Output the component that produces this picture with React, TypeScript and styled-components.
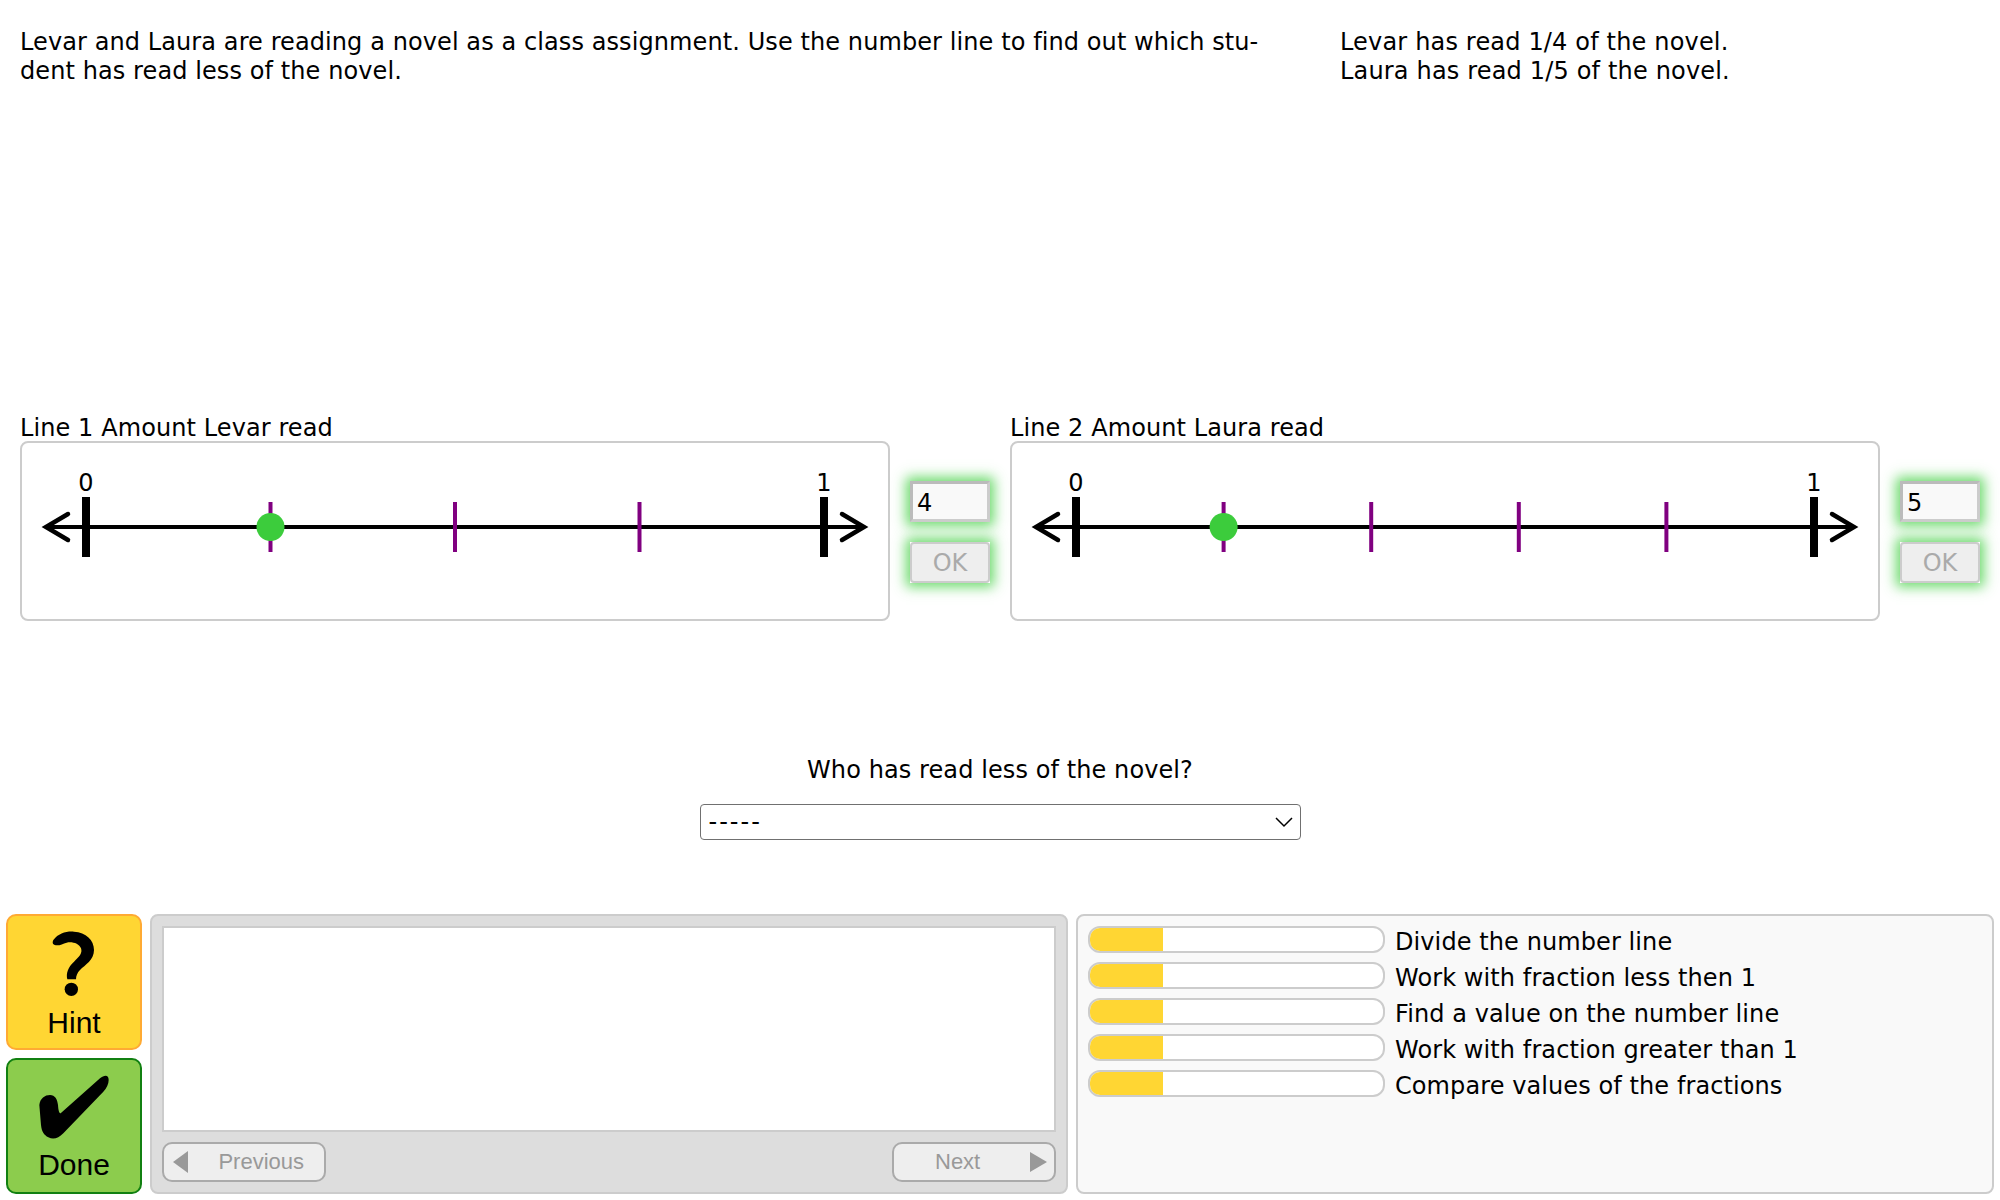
import React from "react";
import styled, { createGlobalStyle } from "styled-components";

const Global = createGlobalStyle`
  html, body { margin: 0; padding: 0; background: #fff; }
  * { box-sizing: border-box; }
`;

const Page = styled.div`
  width: 2000px;
  height: 1200px;
  overflow: hidden;
  font-family: "DejaVu Sans", Verdana, sans-serif;
  font-size: 24px;
  line-height: 29px;
  letter-spacing: 0.09px;
  color: #000;
`;

const Prompt = styled.div`
  height: 412px;
  padding: 28px 0 0 20px;
  display: flex;
`;
const PromptText = styled.div`
  width: 1320px;
`;
const PromptFacts = styled.div`
  letter-spacing: 0.17px;
`;

const Lines = styled.div`
  display: flex;
  gap: 20px;
  padding-left: 20px;
`;
const LineGroup = styled.div`
  width: 970px;
`;
const LineTitle = styled.div`
  height: 29px;
  line-height: 32px;
`;
const LineBody = styled.div`
  display: flex;
  gap: 20px;
`;
const LinePanel = styled.div`
  width: 870px;
  height: 180px;
  border: 2px solid #ccc;
  border-radius: 8px;
  background: #fff;
`;
const LineSvg = styled.svg`
  display: block;
`;
const TickLabel = styled.text`
  font-family: "DejaVu Sans", Verdana, sans-serif;
  font-size: 24px;
`;
const Controls = styled.div`
  width: 80px;
  padding-top: 40px;
  display: flex;
  flex-direction: column;
  gap: 20px;
`;
const ValueInput = styled.input`
  display: block;
  width: 80px;
  height: 41px;
  padding: 2px 0 0 4px;
  border-style: solid;
  border-width: 3px;
  border-color: #bbb #ccc #ccc #bbb;
  background: #f9f9f9;
  font: 24px "DejaVu Sans", Verdana, sans-serif;
  color: #000;
  outline: none;
  box-shadow: 0 0 12px 4px rgba(51, 204, 51, 0.72);
`;
const OkButton = styled.button`
  display: block;
  width: 80px;
  height: 41px;
  padding: 0;
  border: 2px solid #ccc;
  border-radius: 4px;
  background: #eee;
  font: 24px "DejaVu Sans", Verdana, sans-serif;
  color: #aaa;
`;
const OkFrame = styled.div`
  background: #fff;
  box-shadow: 0 0 12px 4px rgba(51, 204, 51, 0.72);
`;

const Question = styled.div`
  margin-top: 135px;
  text-align: center;
`;
const SelectWrap = styled.div`
  position: relative;
  width: 601px;
  height: 36px;
  margin: 19px auto 0;
`;
const Select = styled.select`
  appearance: none;
  display: block;
  width: 100%;
  height: 100%;
  padding: 0 8px;
  border: 1.5px solid #707070;
  border-radius: 4px;
  background: #fff;
  font: 24px "DejaVu Sans", Verdana, sans-serif;
  letter-spacing: 2px;
  color: #000;
`;
const Chevron = styled.svg`
  position: absolute;
  right: 7px;
  top: 12px;
  pointer-events: none;
`;

const Bottom = styled.div`
  margin-top: 74px;
  display: flex;
  gap: 8px;
  padding-left: 6px;
`;
const ActionColumn = styled.div`
  display: flex;
  flex-direction: column;
  gap: 8px;
`;
const ActionButton = styled.button<{ $bg: string; $edge: string }>`
  width: 136px;
  height: 136px;
  padding: 0;
  border: 2px solid ${(p) => p.$edge};
  border-radius: 10px;
  background: ${(p) => p.$bg};
  font: 30px/33px "Liberation Sans", Arial, sans-serif;
  color: #000;
  display: flex;
  flex-direction: column;
  align-items: center;
`;
const ActionIcon = styled.svg`
  display: block;
  flex: none;
`;

const MessagePanel = styled.div`
  width: 918px;
  height: 280px;
  padding: 10px;
  background: #ddd;
  border: 2px solid #ccc;
  border-radius: 8px;
`;
const MessageBox = styled.div`
  width: 894px;
  height: 206px;
  background: #fff;
  border: 2px solid #ccc;
`;
const NavRow = styled.div`
  display: flex;
  justify-content: space-between;
  margin-top: 10px;
  width: 894px;
`;
const NavButton = styled.button`
  width: 164px;
  height: 40px;
  padding: 0 7px 0 9px;
  border: 2px solid #aaa;
  border-radius: 10px;
  background: #eee;
  font: 22px "Liberation Sans", Arial, sans-serif;
  color: #999;
  display: flex;
  align-items: center;
  justify-content: space-between;
`;
const NavLabel = styled.span<{ $pad: string }>`
  padding: ${(p) => p.$pad};
`;

const GoalsPanel = styled.div`
  width: 918px;
  height: 280px;
  padding: 10px;
  background: #f9f9f9;
  border: 2px solid #ccc;
  border-radius: 8px;
  display: flex;
  flex-direction: column;
  gap: 9px;
`;
const GoalRow = styled.div`
  display: flex;
  align-items: center;
  gap: 10px;
  height: 27px;
`;
const GoalText = styled.span`
  padding-top: 6px;
`;
const Bar = styled.div`
  width: 297px;
  height: 27px;
  border: 2px solid #ccc;
  border-radius: 12px;
  background: #fff;
  overflow: hidden;
`;
const BarFill = styled.div`
  height: 100%;
  background: #ffd633;
`;

function NumberLine({ parts }: { parts: number }) {
  const x0 = 64;
  const x1 = 802;
  const step = (x1 - x0) / parts;
  const ticks = Array.from({ length: parts - 1 }, (_, i) => x0 + step * (i + 1));
  return (
    <LineSvg width={866} height={176} viewBox="0 0 866 176">
      <line x1={26} y1={84} x2={840} y2={84} stroke="#000" strokeWidth={4} />
      <path d="M46 71 L24 84 L46 97" fill="none" stroke="#000" strokeWidth={4.5} strokeLinecap="round" />
      <path d="M820 71 L842 84 L820 97" fill="none" stroke="#000" strokeWidth={4.5} strokeLinecap="round" />
      {ticks.map((x) => (
        <line key={x} x1={x} y1={59} x2={x} y2={109} stroke="#800080" strokeWidth={4} />
      ))}
      <line x1={x0} y1={54} x2={x0} y2={114} stroke="#000" strokeWidth={8} />
      <line x1={x1} y1={54} x2={x1} y2={114} stroke="#000" strokeWidth={8} />
      <TickLabel x={x0} y={48} textAnchor="middle">0</TickLabel>
      <TickLabel x={x1} y={48} textAnchor="middle">1</TickLabel>
      <circle cx={ticks[0]} cy={84} r={14} fill="#3ccc3c" />
    </LineSvg>
  );
}

function LineBlock({ title, parts, value }: { title: string; parts: number; value: string }) {
  return (
    <LineGroup>
      <LineTitle>{title}</LineTitle>
      <LineBody>
        <LinePanel>
          <NumberLine parts={parts} />
        </LinePanel>
        <Controls>
          <ValueInput value={value} readOnly />
          <OkFrame>
            <OkButton disabled>OK</OkButton>
          </OkFrame>
        </Controls>
      </LineBody>
    </LineGroup>
  );
}

const goals = [
  "Divide the number line",
  "Work with fraction less then 1",
  "Find a value on the number line",
  "Work with fraction greater than 1",
  "Compare values of the fractions",
];

export default function App() {
  return (
    <Page>
      <Global />
      <Prompt>
        <PromptText>
          Levar and Laura are reading a novel as a class assignment. Use the number line to find out which stu-
          <br />
          dent has read less of the novel.
        </PromptText>
        <PromptFacts>
          Levar has read 1/4 of the novel.
          <br />
          Laura has read 1/5 of the novel.
        </PromptFacts>
      </Prompt>
      <Lines>
        <LineBlock title="Line 1 Amount Levar read" parts={4} value="4" />
        <LineBlock title="Line 2 Amount Laura read" parts={5} value="5" />
      </Lines>
      <Question>
        <div>Who has read less of the novel?</div>
        <SelectWrap>
          <Select defaultValue="none">
            <option value="none">-----</option>
            <option value="levar">Levar</option>
            <option value="laura">Laura</option>
          </Select>
          <Chevron width={20} height={12} viewBox="0 0 20 12">
            <path d="M2 2 L10 10 L18 2" fill="none" stroke="#000" strokeWidth={1.5} />
          </Chevron>
        </SelectWrap>
      </Question>
      <Bottom>
        <ActionColumn>
          <ActionButton $bg="#ffd633" $edge="#ffaa33">
            <ActionIcon width={132} height={90} viewBox="24 48 396 270">
              <path d="M160 120 C175 100 200 93 222 95 C258 97 282 120 282 150 C282 180 255 195 240 210 C232 218 228 228 228 238 L202 238 C197 220 205 200 222 185 C238 170 248 160 243 145 C238 130 215 124 200 128 C190 131 180 136 172 136 C160 136 155 130 160 120 Z" />
              <circle cx={214} cy={268} r={20} />
            </ActionIcon>
            Hint
          </ActionButton>
          <ActionButton $bg="#8ccc4d" $edge="#118011">
            <ActionIcon width={132} height={88} viewBox="24 480 396 264">
              <path d="M118 615 C120 595 135 585 150 585 C165 585 172 598 174 615 C175 630 177 640 182 640 L300 535 C312 525 326 522 326 540 C326 552 320 565 310 575 L190 700 C175 715 160 720 145 712 C132 705 125 695 123 675 Z" />
            </ActionIcon>
            Done
          </ActionButton>
        </ActionColumn>
        <MessagePanel>
          <MessageBox />
          <NavRow>
            <NavButton disabled>
              <svg width={16} height={22} viewBox="0 0 16 22">
                <path d="M15 0 V22 L0 11 Z" fill="#999" />
              </svg>
              <NavLabel $pad="0 13px 0 0">Previous</NavLabel>
            </NavButton>
            <NavButton disabled>
              <NavLabel $pad="0 0 0 32px">Next</NavLabel>
              <svg width={17} height={20} viewBox="0 0 17 20">
                <path d="M0 0 V20 L17 10 Z" fill="#999" />
              </svg>
            </NavButton>
          </NavRow>
        </MessagePanel>
        <GoalsPanel>
          {goals.map((g) => (
            <GoalRow key={g}>
              <Bar>
                <BarFill style={{ width: "25%" }} />
              </Bar>
              <GoalText>{g}</GoalText>
            </GoalRow>
          ))}
        </GoalsPanel>
      </Bottom>
    </Page>
  );
}
